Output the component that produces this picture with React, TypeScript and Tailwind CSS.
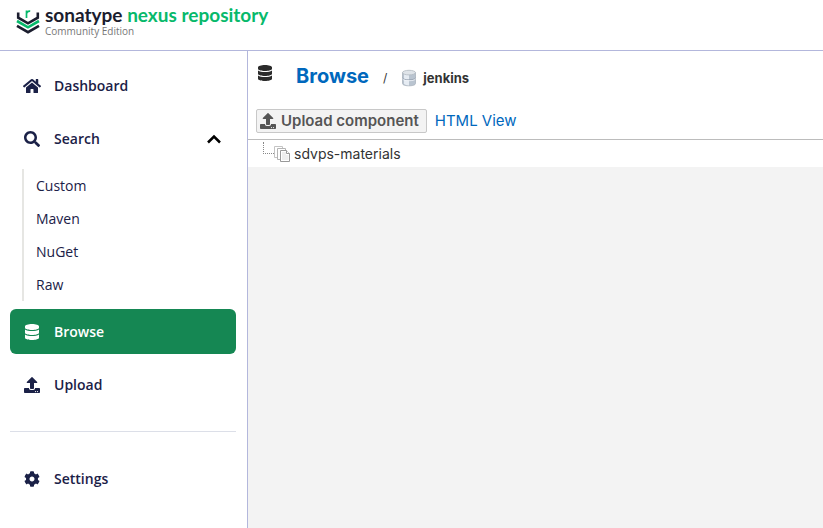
import type { ReactNode } from "react";
import { FaCog, FaDatabase, FaHome, FaSearch, FaUpload } from "react-icons/fa";

function LogoMark() {
  return (
    <svg viewBox="0 0 24 28" className="mt-0.5 h-7 w-6" aria-hidden="true" fill="none">
      <path d="M2.200 5.500v5.200L12 16.300l9.800-5.600V5.500" stroke="#1b1d2e" strokeWidth="2.600" />
      <path d="M1 14L12 20.300l11-6.300" stroke="#07b96b" strokeWidth="2.600" />
      <path d="M1 18.800L12 25.200l11-6.400" stroke="#1b1d2e" strokeWidth="2.600" />
      <path d="M10.500 11V3.600M10.500 6.400Q11.200 3.900 14.200 4.200" stroke="#07b96b" strokeWidth="1.700" />
    </svg>
  );
}

function RepositoryIcon() {
  return (
    <svg viewBox="0 0 16 18" className="h-[18px] w-4" aria-hidden="true">
      <path d="M1.500 3.500v11c0 1.500 3 2.300 6.500 2.300s6.500-.8 6.500-2.300v-11z" fill="#b9c4d0" stroke="#a9b2bd" strokeWidth=".8" />
      <path d="M3 4.500h5v12L5 16l-2-1z" fill="#e6ecf3" />
      <ellipse cx="8" cy="3.600" rx="6.500" ry="2.300" fill="#dfe4e9" stroke="#b3bac2" strokeWidth=".8" />
      <path d="M1.500 9c1 1.400 3.500 1.800 6.500 1.800s5.500-.4 6.500-1.800" fill="none" stroke="#8f9baa" strokeWidth=".8" />
      <path d="M1.500 9.900c1 1.400 3.500 1.800 6.500 1.800s5.500-.4 6.500-1.800" fill="none" stroke="#f5f8fb" strokeWidth=".8" />
    </svg>
  );
}

function ComponentIcon() {
  return (
    <svg viewBox="0 0 17 16" className="h-4 w-[17px]" aria-hidden="true" fill="#fff" stroke="#aaa" strokeWidth="1">
      <path d="M.5.500h8v11h-8z" stroke="#c4c4c4" />
      <path d="M3.500 2.500h8v11h-8z" stroke="#b4b4b4" />
      <path d="M6.500 4.500h6l3 3v8h-9z" stroke="#999" />
      <path d="M8 6h4v3h2.500v5H8z" fill="#eee" stroke="none" />
      <path d="M12.500 4.500v3h3" stroke="#999" />
    </svg>
  );
}

function NavItem({ icon, label, active }: { icon: ReactNode; label: string; active?: boolean }) {
  return (
    <a
      href="#"
      aria-current={active ? "page" : undefined}
      className={`flex h-[45px] items-center gap-3 rounded-md pr-3.5 pl-[13px] text-sm font-semibold ${active ? "bg-[#158753] text-white" : "text-[#1b2147]"}`}
    >
      <span className="flex w-[18px] justify-center">{icon}</span>
      <span className="pl-px">{label}</span>
    </a>
  );
}

export default function App() {
  return (
    <div className="flex min-h-screen flex-col bg-white font-['Open_Sans','Noto_Sans',sans-serif]">
      <header className="flex h-[51px] items-start gap-[5px] border-b border-[#b3b7dc] px-4 pt-[5px]">
        <LogoMark />
        <div>
          <div className="font-['Lato',sans-serif] text-[19px] leading-5 font-bold text-[#1b1d2e]">
            sonatype <span className="text-[#07b96b]">nexus repository</span>
          </div>
          <div className="text-[10px] leading-3 text-[#777]">Community Edition</div>
        </div>
      </header>

      <div className="flex flex-1">
        <nav className="flex w-[248px] shrink-0 flex-col gap-2 border-r border-[#b3b7dc] pt-3 pr-[11px] pl-2.5">
          <NavItem icon={<FaHome size={18} />} label="Dashboard" />
          <button
            type="button"
            aria-expanded="true"
            className="flex h-[45px] items-center gap-3 pr-3.5 pl-[13px] text-sm font-semibold text-[#1b2147]"
          >
            <span className="flex w-[18px] justify-center">
              <FaSearch size={16} />
            </span>
            <span className="pl-px">Search</span>
            <svg viewBox="0 0 16 10" className="ml-auto h-2.5 w-4 text-black" aria-hidden="true">
              <path d="M2 8.500L8 2.500l6 6" fill="none" stroke="currentColor" strokeWidth="2.500" />
            </svg>
          </button>
          <ul className="ml-3 border-l-2 border-[#e6e6e3]">
            {["Custom", "Maven", "NuGet", "Raw"].map((name) => (
              <li key={name}>
                <a href="#" className="flex h-[33px] items-center pl-3 text-sm text-[#1b2147]">
                  {name}
                </a>
              </li>
            ))}
          </ul>
          <NavItem icon={<FaDatabase size={16} />} label="Browse" active />
          <NavItem icon={<FaUpload size={16} />} label="Upload" />
          <hr className="my-4 border-[#dcdfe8]" />
          <NavItem icon={<FaCog size={16} />} label="Settings" />
        </nav>

        <main className="flex min-w-0 flex-1 flex-col bg-[#f3f3f3] font-['Inter',sans-serif] text-[#333]">
          <div className="flex h-[58px] items-center bg-white pr-2 pb-2 pl-[9px]">
            <FaDatabase size={16} className="mr-[23px] mb-1.5 text-[#2b2b2b]" />
            <h1 className="text-xl font-bold text-[#0068bd]">Browse</h1>
            <span className="mr-3.5 ml-3.5 pt-1 text-xs">/</span>
            <span className="pt-1">
              <RepositoryIcon />
            </span>
            <span className="ml-1.5 pt-1.5 text-[13px] font-bold">jenkins</span>
          </div>
          <div className="flex h-[31px] items-start gap-2 border-b border-[#bcbcbc] bg-white px-2">
            <button
              type="button"
              className="flex h-6 items-center gap-[5px] rounded-xs border border-[#c8c8c8] bg-[#f3f3f3] pr-[7px] pl-[3px] text-[15px] font-semibold text-[#555]"
            >
              <FaUpload size={16} />
              Upload component
            </button>
            <a href="#" className="text-[15px] leading-6 text-[#0068bd]">
              HTML View
            </a>
          </div>
          <div role="tree" className="bg-white">
            <div role="treeitem" className="flex h-[27px] items-center pl-[15px] text-sm">
              <span className="mb-3 h-3 w-[11px] border-b border-l border-dotted border-[#888]" />
              <ComponentIcon />
              <span className="ml-[3px]">sdvps-materials</span>
            </div>
          </div>
        </main>
      </div>
    </div>
  );
}
